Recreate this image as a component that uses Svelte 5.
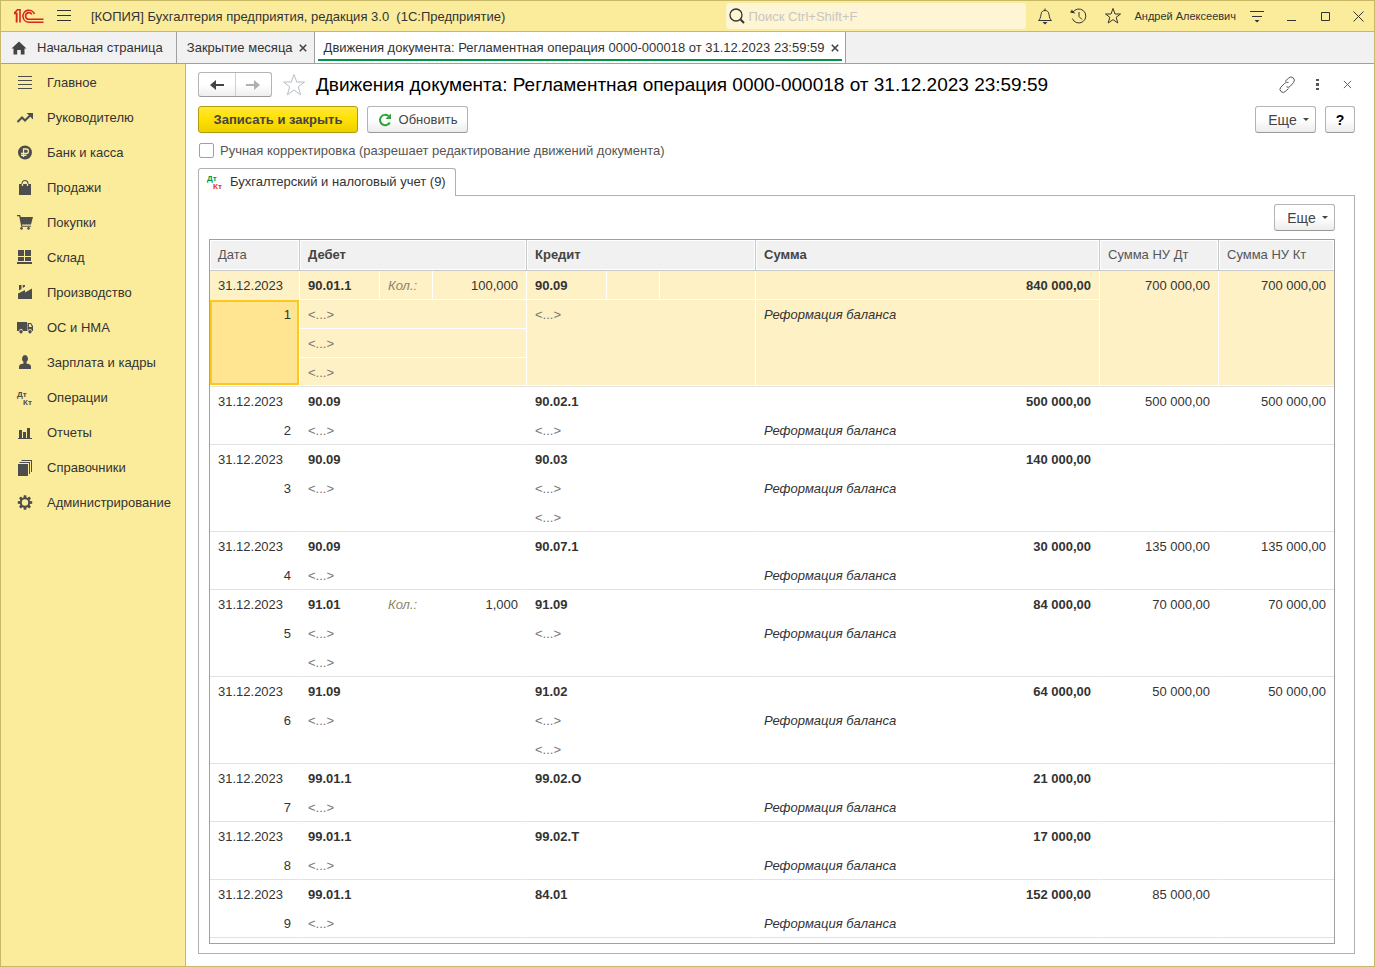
<script>
  const sections = [
    { title: 'Главное', fill: 'M2 2h14v1H2zM2 6h14v1H2zM2 10h14v1H2zM2 14h14v1H2z' },
    { title: 'Руководителю', stroke: 'M1.5 13L6 8.5L9 11.5L14 6.5', fill: 'M10.500 4H17v6.500L14.800 8.300L13 6.300z' },
    {
      title: 'Банк и касса',
      fill: 'M9 1.500a7 7 0 1 0 0 14a7 7 0 1 0 0-14z',
      light: 'M7.500 13V5H10.200a2.200 2.200 0 0 1 0 4.500H5M5 11.300h5.500'
    },
    {
      title: 'Продажи',
      fill: 'M3 5h2.500v-.500a3.500 3.500 0 0 1 7 0V5H15v11H3zM6.500 5h5v-.500a2.500 2.500 0 0 0-5 0z',
      light: 'M6.500 5v2M11.500 5v2'
    },
    {
      title: 'Покупки',
      fill: 'M1 1h3.200l.6 2H17l-2 7.500H6l.3 1.200H15v1H5.300L3.200 2.200H1zM5.500 13a1.400 1.400 0 1 0 .01 0zM12.500 13a1.400 1.400 0 1 0 .01 0z'
    },
    { title: 'Склад', fill: 'M2 1h6v6H2zM9 1h6v6H9zM2 8h6v4H2zM9 8h6v4H9zM1 13h15v2H1z' },
    { title: 'Производство', fill: 'M2 15V9.500L9 6v2.500L16 4.500V15zM3 1h2.500v4L3 6.500zM6.800 1H9v1.500L6.800 4z' },
    {
      title: 'ОС и НМА',
      fill: 'M1 3h10v9H7a2 2 0 0 0-4 0H1zM11.500 4H15l2 3v5h-1a2 2 0 0 0-4 0h-.500zM13 5v3h3L14.500 5zM5 11a1.700 1.700 0 1 0 .01 0zM14 11a1.700 1.700 0 1 0 .01 0z'
    },
    { title: 'Зарплата и кадры', fill: 'M9 1a3.300 3.800 0 0 1 1.500 7V9.500c3 .5 4.500 1.200 4.500 3.500v2H3v-2c0-2.300 1.500-3 4.500-3.500V8A3.300 3.800 0 0 1 9 1z' },
    { title: 'Операции', dtkt: true },
    { title: 'Отчеты', fill: 'M2 14h14v1H2zM3 6h3v8H3zM7 8h3v6H7zM11 4h3v10h-3z' },
    { title: 'Справочники', fill: 'M2 5h10v12H2zM3.500 3H14v12h-1V4H3.500zM5.500 1H16v12h-1V2H5.500z' },
    { title: 'Администрирование', gear: true }
  ]

  const entries = [
    { debit: '90.01.1', qty: '100,000', credit: '90.09', sum: '840 000,00', dt: '700 000,00', kt: '700 000,00', debitSub: 3, creditSub: 1 },
    { debit: '90.09', credit: '90.02.1', sum: '500 000,00', dt: '500 000,00', kt: '500 000,00', debitSub: 1, creditSub: 1 },
    { debit: '90.09', credit: '90.03', sum: '140 000,00', debitSub: 1, creditSub: 2 },
    { debit: '90.09', credit: '90.07.1', sum: '30 000,00', dt: '135 000,00', kt: '135 000,00', debitSub: 1, creditSub: 0 },
    { debit: '91.01', qty: '1,000', credit: '91.09', sum: '84 000,00', dt: '70 000,00', kt: '70 000,00', debitSub: 2, creditSub: 1 },
    { debit: '91.09', credit: '91.02', sum: '64 000,00', dt: '50 000,00', kt: '50 000,00', debitSub: 1, creditSub: 2 },
    { debit: '99.01.1', credit: '99.02.О', sum: '21 000,00', debitSub: 1, creditSub: 0 },
    { debit: '99.01.1', credit: '99.02.Т', sum: '17 000,00', debitSub: 1, creditSub: 0 },
    { debit: '99.01.1', credit: '84.01', sum: '152 000,00', dt: '85 000,00', debitSub: 1, creditSub: 0 }
  ]

  const documentTitle = 'Движения документа: Регламентная операция 0000-000018 от 31.12.2023 23:59:59'

  let selected = $state(0)
  let manual = $state(false)
  let search = $state('')
</script>

{#snippet cross(size)}
  <svg width={size} height={size} viewBox="0 0 10 10"><path d="M1 1L9 9M9 1L1 9" /></svg>
{/snippet}

{#snippet dtkt()}
  <svg class="dtkt" width="18" height="18" viewBox="0 0 18 18">
    <text x="1" y="8">Дт</text>
    <text class="kt" x="7" y="16">Кт</text>
  </svg>
{/snippet}

{#snippet more()}
  <button class="btn more">Еще <span class="caret"></span></button>
{/snippet}

<div class="window">
  <header class="titlebar">
    <svg class="logo" width="30" height="16" viewBox="0 0 30 16" aria-label="1С">
      <path d="M0 5.500H2.500V14.500M0 5.500L3.500 1.800H6V14.500M2.800 4.500V14.500" />
      <path d="M20.500 6A6 6 0 1 0 15 14.200H29.500" />
      <path d="M17.800 6.500A3.300 3.300 0 1 0 15 11.300H29.500" />
    </svg>
    <button class="tool burger" aria-label="Меню">
      <svg width="16" height="14" viewBox="0 0 16 14"><path d="M1 1.500H15M1 6.500H15M1 11.500H15" /></svg>
    </button>
    <span class="app-title">[КОПИЯ] Бухгалтерия предприятия, редакция 3.0&nbsp; (1С:Предприятие)</span>
    <label class="search">
      <svg width="18" height="18" viewBox="0 0 18 18"><circle cx="8" cy="8" r="6" /><path class="thick" d="M12.500 12.500L16 16" /></svg>
      <input type="text" placeholder="Поиск Ctrl+Shift+F" aria-label="Поиск" bind:value={search} />
    </label>
    <button class="tool" aria-label="Уведомления">
      <svg width="18" height="18" viewBox="0 0 18 18">
        <path d="M2.500 13.500C4 12 4.500 11 5 7.500C5.300 4.500 7 3.500 9 3.500S12.700 4.500 13 7.500C13.500 11 14 12 15.500 13.500zM9 1.500V3.500" />
        <path class="solid" d="M6.500 15h5L9 17.500z" />
      </svg>
    </button>
    <button class="tool" aria-label="История">
      <svg width="18" height="18" viewBox="0 0 18 18">
        <path d="M2.500 6A7 7 0 1 1 2.300 11.500M9 5V9.500L12 12.500" />
        <path class="solid" d="M0 5.500L5.500 6.500L1.800 2.800z" />
      </svg>
    </button>
    <button class="tool" aria-label="Избранное">
      <svg width="18" height="18" viewBox="0 0 18 18"><path d="M9 1.500L11 7H16.500L12.200 10.300L13.800 16L9 12.600L4.200 16L5.800 10.300L1.500 7H7z" /></svg>
    </button>
    <button class="user">Андрей Алексеевич</button>
    <button class="tool" aria-label="Сервис">
      <svg width="18" height="18" viewBox="0 0 18 18"><path d="M2 4.500H16M4 9.500H14" /><path class="solid" d="M6.500 13h5L9 15.500z" /></svg>
    </button>
    <button class="tool" aria-label="Свернуть">
      <svg width="18" height="18" viewBox="0 0 18 18"><path d="M5 13.500H14" /></svg>
    </button>
    <button class="tool" aria-label="Развернуть">
      <svg width="18" height="18" viewBox="0 0 18 18"><path d="M5.500 5.500H13.500V13.500H5.500z" /></svg>
    </button>
    <button class="tool quit" aria-label="Закрыть программу">
      <svg width="18" height="18" viewBox="0 0 18 18"><path d="M4.500 4.500L14.500 14.500M14.500 4.500L4.500 14.500" /></svg>
    </button>
  </header>

  <nav class="tabs">
    <div class="tab home">
      <svg width="16" height="14" viewBox="0 0 16 14"><path d="M8 0.500L15.500 7.500H13.500V13.500H9.800V9H6.200V13.500H2.500V7.500H0.500z" /></svg>
      <a href="#home">Начальная страница</a>
    </div>
    <div class="tab">
      <a href="#month">Закрытие месяца</a>
      <button class="tab-close" aria-label="Закрыть вкладку">{@render cross(8)}</button>
    </div>
    <div class="tab active">
      <a href="#document">{documentTitle}</a>
      <button class="tab-close" aria-label="Закрыть вкладку">{@render cross(8)}</button>
    </div>
  </nav>

  <div class="body">
    <nav class="sidebar">
      {#each sections as section}
        <a href="#section">
          {#if section.dtkt}
            {@render dtkt()}
          {:else if section.gear}
            <svg width="18" height="18" viewBox="0 0 18 18">
              <circle class="line" cx="9" cy="8.500" r="4.200" />
              {#each [0, 45, 90, 135, 180, 225, 270, 315] as angle}
                <path d="M7.800 1.300h2.400l.4 3H7.400z" transform="rotate({angle} 9 8.500)" />
              {/each}
            </svg>
          {:else}
            <svg width="18" height="18" viewBox="0 0 18 18">
              <path fill-rule="evenodd" d={section.fill} />
              {#if section.stroke}<path class="line" d={section.stroke} />{/if}
              {#if section.light}<path class="light" d={section.light} />{/if}
            </svg>
          {/if}
          <span>{section.title}</span>
        </a>
      {/each}
    </nav>

    <main>
      <div class="heading">
        <div class="history">
          <button aria-label="Назад">
            <svg width="16" height="12" viewBox="0 0 16 12"><path d="M1 6L7 1V5H15V7H7V11z" /></svg>
          </button>
          <button aria-label="Вперед" disabled>
            <svg width="16" height="12" viewBox="0 0 16 12"><path d="M15 6L9 1V5H1V7H9V11z" /></svg>
          </button>
        </div>
        <button class="star" aria-label="В избранное">
          <svg width="24" height="24" viewBox="0 0 24 24"><path d="M12 1.500L14.700 9H22.500L16.300 13.800L18.600 21.800L12 17L5.400 21.800L7.700 13.800L1.500 9H9.300z" /></svg>
        </button>
        <h1>{documentTitle}</h1>
        <button class="tool" aria-label="Получить ссылку">
          <svg width="18" height="18" viewBox="0 0 18 18">
            <path d="M7 5.500L10.500 2.200A3.100 3.100 0 0 1 15.500 6.500L12 10.500Q10.500 12 8.500 10.800M10.500 6.500Q8.500 5.500 6.500 7.500L2.800 11.200A3.100 3.100 0 0 0 7.500 15.300L10.500 12.500" />
          </svg>
        </button>
        <button class="tool" aria-label="Дополнительно">
          <svg width="18" height="18" viewBox="0 0 18 18"><path class="dots" d="M8 3h3v2H8zM8 7h3v3H8zM8 12h3v2H8z" /></svg>
        </button>
        <button class="tool" aria-label="Закрыть">{@render cross(9)}</button>
      </div>

      <div class="commands">
        <button class="btn primary">Записать и закрыть</button>
        <button class="btn refresh">
          <svg width="14" height="14" viewBox="0 0 14 14"><path d="M11.800 9.500A5.200 5.200 0 1 1 10.500 3" /><path class="head" d="M13 0.500V6H7.500z" /></svg>
          Обновить
        </button>
        <span class="spacer"></span>
        {@render more()}
        <button class="btn help">?</button>
      </div>

      <label class="manual">
        <input type="checkbox" bind:checked={manual} />
        Ручная корректировка (разрешает редактирование движений документа)
      </label>

      <button class="page-tab">
        {@render dtkt()}
        Бухгалтерский и налоговый учет (9)
      </button>

      <section class="panel">
        {@render more()}
        <div class="grid">
          <table>
            <colgroup>
              <col class="c-date" /><col class="c-debit" /><col class="c-credit" /><col /><col class="c-dt" /><col class="c-kt" />
            </colgroup>
            <thead>
              <tr>
                <th>Дата</th>
                <th class="strong">Дебет</th>
                <th class="strong">Кредит</th>
                <th class="strong">Сумма</th>
                <th>Сумма НУ Дт</th>
                <th>Сумма НУ Кт</th>
              </tr>
            </thead>
            <tbody>
              {#each entries as entry, i}
                <tr class:selected={selected === i} onclick={() => (selected = i)}>
                  <td class="date">
                    <div class="line">31.12.2023</div>
                    <div class="line number">{i + 1}</div>
                  </td>
                  <td>
                    <div class="line account">
                      <b>{entry.debit}</b>
                      <i>{entry.qty ? 'Кол.:' : ''}</i>
                      <span>{entry.qty ?? ''}</span>
                    </div>
                    {#each { length: entry.debitSub } as _}
                      <div class="line empty">&lt;...&gt;</div>
                    {/each}
                  </td>
                  <td>
                    <div class="line account"><b>{entry.credit}</b><i></i><span></span></div>
                    {#each { length: entry.creditSub } as _}
                      <div class="line empty">&lt;...&gt;</div>
                    {/each}
                  </td>
                  <td>
                    <div class="line sum">{entry.sum}</div>
                    <div class="line note">Реформация баланса</div>
                  </td>
                  <td class="tax">{entry.dt ?? ''}</td>
                  <td class="tax">{entry.kt ?? ''}</td>
                </tr>
              {/each}
            </tbody>
          </table>
        </div>
      </section>
    </main>
  </div>
</div>

<style>
  :global(body) {
    font-family: "Liberation Sans", Arial, sans-serif;
    font-size: 13px;
    color: #333;
    background: #fff;
  }

  .window {
    display: flex;
    flex-direction: column;
    box-sizing: border-box;
    min-height: 100vh;
    border: 1px solid #c8b968;
  }

  button {
    font: inherit;
    color: inherit;
    padding: 0;
    border: none;
    background: none;
  }

  a {
    color: inherit;
    text-decoration: none;
  }

  svg {
    flex: none;
  }

  .titlebar {
    display: flex;
    align-items: center;
    height: 30px;
    background: #fbec9c;
    border-bottom: 1px solid #c8b968;
  }

  .logo {
    margin-left: 13px;
    fill: none;
    stroke: #d9261c;
    stroke-width: 1.6;
  }

  .app-title {
    margin-left: 9px;
    white-space: nowrap;
    flex: 1;
  }

  .tool {
    display: flex;
    align-items: center;
    justify-content: center;
    width: 34px;
    height: 26px;
    fill: none;
    stroke: #333;
  }

  .burger {
    width: 36px;
    margin-left: 2px;
  }

  .quit {
    width: 32px;
  }

  .solid {
    fill: #333;
    stroke: none;
  }

  .dots {
    fill: #555;
    stroke: none;
  }

  .thick {
    stroke-width: 2;
  }

  .search {
    display: flex;
    align-items: center;
    width: 300px;
    height: 26px;
    margin-right: 2px;
    border-radius: 3px;
    background: #fdf5d4;
    fill: none;
    stroke: #333;
    stroke-width: 1.3;
  }

  .search svg {
    margin-left: 2px;
  }

  .search input {
    flex: 1;
    min-width: 0;
    padding: 0 2px;
    border: none;
    outline: none;
    background: none;
    font: inherit;
  }

  .search input::placeholder {
    color: #c8c6c0;
  }

  .user {
    margin: 0 4px;
    font-size: 11px;
    white-space: nowrap;
  }

  .tabs {
    display: flex;
    height: 31px;
    background: #f1f1f1;
    border-bottom: 1px solid #a0a0a0;
  }

  .tab {
    display: flex;
    align-items: center;
    gap: 6px;
    padding: 0 7px 0 10px;
    border-right: 1px solid #a0a0a0;
    white-space: nowrap;
  }

  .tab.home {
    gap: 10px;
    padding-right: 13px;
    fill: #444;
  }

  .tab.active {
    position: relative;
    padding: 0 6px 0 9px;
    background: #fff;
  }

  .tab.active::after {
    content: "";
    position: absolute;
    left: 3px;
    right: 3px;
    bottom: 2px;
    height: 2px;
    background: #009646;
  }

  .tab-close {
    display: flex;
    stroke: #444;
    stroke-width: 2;
  }

  .body {
    display: flex;
    flex: 1;
  }

  .sidebar {
    flex: none;
    width: 184px;
    padding-top: 1px;
    background: #fbec9c;
    border-right: 1px solid #c8b968;
  }

  .sidebar a {
    display: flex;
    align-items: center;
    gap: 13px;
    height: 35px;
    padding-left: 15px;
    white-space: nowrap;
    fill: #4d4d4d;
  }

  .sidebar .line {
    fill: none;
    stroke: #4d4d4d;
    stroke-width: 2;
  }

  .sidebar .light {
    fill: none;
    stroke: #fbec9c;
    stroke-width: 1.3;
  }

  .dtkt {
    font-size: 8px;
    font-weight: bold;
  }

  main {
    display: flex;
    flex-direction: column;
    flex: 1;
    min-width: 0;
    padding: 8px 19px 12px 12px;
  }

  .heading {
    display: flex;
    align-items: center;
    height: 25px;
  }

  .history {
    display: flex;
    box-sizing: border-box;
    width: 74px;
    height: 25px;
    border: 1px solid #b4b4b4;
    border-bottom-color: #999;
    border-radius: 3px;
    background: linear-gradient(#fff 50%, #eee);
  }

  .history button {
    display: flex;
    flex: 1;
    align-items: center;
    justify-content: center;
    fill: #444;
  }

  .history button + button {
    border-left: 1px solid #d0d0d0;
    fill: #b0b0b0;
  }

  .star {
    display: flex;
    margin: 0 10px;
    fill: none;
    stroke: #b8bcc4;
  }

  h1 {
    flex: 1;
    margin: 0;
    font-size: 19px;
    font-weight: normal;
    color: #000;
    white-space: nowrap;
  }

  .heading .tool {
    width: 30px;
    stroke: #555;
  }

  .heading .tool:last-child {
    margin-right: -7px;
  }

  .commands {
    display: flex;
    gap: 9px;
    margin-top: 9px;
  }

  .spacer {
    flex: 1;
  }

  .btn {
    display: flex;
    align-items: center;
    justify-content: center;
    box-sizing: border-box;
    height: 27px;
    border: 1px solid #b4b4b4;
    border-bottom-color: #999;
    border-radius: 3px;
    background: linear-gradient(#fff 50%, #ececec);
    color: #444;
    white-space: nowrap;
  }

  .primary {
    width: 160px;
    border-color: #b09c10;
    background: linear-gradient(#ffe83a, #ffe000 50%, #ecd000);
    font-weight: bold;
  }

  .refresh {
    width: 101px;
    gap: 7px;
    fill: none;
    stroke: #2fa336;
    stroke-width: 2;
  }

  .head {
    fill: #2fa336;
    stroke: none;
  }

  .more {
    width: 61px;
    gap: 6px;
    padding-left: 6px;
    font-size: 14px;
  }

  .caret {
    border: 3px solid transparent;
    border-top-color: #444;
    border-bottom: none;
  }

  .help {
    width: 30px;
    color: #000;
    font-size: 14px;
    font-weight: bold;
  }

  .manual {
    display: flex;
    align-items: center;
    gap: 6px;
    height: 17px;
    margin-top: 9px;
    padding-left: 1px;
    color: #555;
  }

  .manual input {
    appearance: none;
    box-sizing: border-box;
    width: 15px;
    height: 15px;
    margin: 0;
    border: 1px solid #a0a0a0;
    border-radius: 2px;
    background: #fff;
  }

  .manual input:checked {
    background: #4d4d4d;
  }

  .page-tab {
    display: flex;
    align-items: center;
    align-self: flex-start;
    gap: 6px;
    position: relative;
    box-sizing: border-box;
    height: 28px;
    margin: 9px 0 -1px;
    padding: 0 9px 2px 7px;
    border: 1px solid #b0b0b0;
    border-bottom: none;
    border-radius: 3px 3px 0 0;
    background: #fff;
  }

  .page-tab .dtkt {
    fill: #009646;
  }

  .page-tab .kt {
    fill: #d9362c;
  }

  .panel {
    display: flex;
    flex-direction: column;
    flex: 1;
    padding: 8px 19px 9px 10px;
    border: 1px solid #b0b0b0;
  }

  .panel .more {
    align-self: flex-end;
  }

  .grid {
    flex: 1;
    margin-top: 8px;
    border: 1px solid #a0a0a0;
  }

  table {
    width: 100%;
    table-layout: fixed;
    border-spacing: 0;
  }

  .c-date { width: 90px; }
  .c-debit { width: 227px; }
  .c-credit { width: 229px; }
  .c-dt { width: 119px; }
  .c-kt { width: 115px; }

  th {
    height: 28px;
    padding: 0 8px 2px;
    border-right: 1px solid #c8c8c8;
    border-bottom: 1px solid #c8c8c8;
    box-shadow: inset 0 0 0 1px #fff;
    background: #f1f1f1;
    color: #555;
    font-weight: normal;
    text-align: left;
  }

  th.strong {
    font-weight: bold;
    color: #444;
  }

  td {
    padding: 0;
    border-right: 1px solid transparent;
    border-bottom: 1px solid #e2e2e2;
    vertical-align: top;
    line-height: 30px;
  }

  th:last-child,
  td:last-child {
    border-right: none;
  }

  td .line {
    box-sizing: border-box;
    height: 29px;
    padding: 0 8px;
    border-bottom: 1px solid transparent;
  }

  td .line:last-child {
    height: 28px;
    border-bottom: none;
  }

  .account {
    display: grid;
    grid-template-columns: 80px 53px 1fr;
  }

  td .account {
    padding: 0;
  }

  .account b,
  .account i,
  .account span {
    height: 28px;
    padding: 0 8px;
    border-right: 1px solid transparent;
  }

  .account i {
    color: #8c8468;
  }

  .account span {
    padding-right: 7px;
    text-align: right;
  }

  .number,
  .sum,
  .tax {
    text-align: right;
  }

  .tax {
    padding: 0 8px;
  }

  .sum {
    font-weight: bold;
  }

  .note {
    font-style: italic;
  }

  .empty {
    color: #777;
  }

  .selected td {
    background: #fef1c5;
    border-right-color: #fff;
    box-shadow: inset 0 -1px #fff;
  }

  .selected .line:not(:last-child) {
    border-bottom-color: #fff;
  }

  .selected .account b,
  .selected .account i {
    border-right-color: #fff;
  }

  .selected .date .number {
    height: 85px;
    padding: 0 6px;
    border: 2px solid #fac81e;
    background: #ffe491;
    line-height: 26px;
  }

  .selected .date .line:first-child {
    border-bottom: none;
  }
</style>
